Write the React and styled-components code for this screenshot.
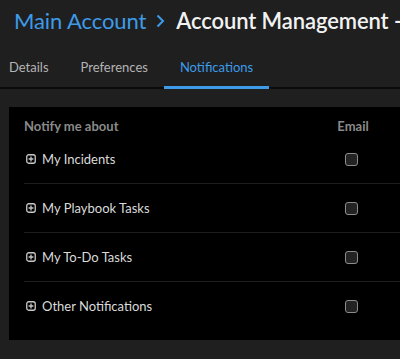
import React from 'react'
import styled, { createGlobalStyle } from 'styled-components'

const GlobalStyle = createGlobalStyle`
    body {
        margin: 0;
        background: #1f1f1f;
        font-family: "Lato", "Open Sans", sans-serif;
        overflow: hidden;
    }
`

const topics = ['My Incidents', 'My Playbook Tasks', 'My To-Do Tasks', 'Other Notifications']

function PlusIcon() {
    return (
        <svg width="10" height="10" viewBox="0 0 10 10">
            <rect x="0.75" y="0.75" width="8.5" height="8.5" rx="2" fill="none" stroke="#c8c8c8" strokeWidth="1.3" />
            <path d="M5 2.6v4.8M2.6 5h4.8" stroke="#c8c8c8" strokeWidth="1.3" />
        </svg>
    )
}

export default function App() {
    return (
        <Page>
            <GlobalStyle />
            <Header>
                <Crumb>Main Account</Crumb>
                <Chevron>
                    <svg width="9" height="14" viewBox="0 0 9 14">
                        <path d="M1.5 1.5l5.5 5.5-5.5 5.5" fill="none" stroke="#3d9be9" strokeWidth="2" />
                    </svg>
                </Chevron>
                <Title>Account Management - Users</Title>
            </Header>

            <TabBar>
                <TabList>
                    <Tab>Details</Tab>
                    <Tab>Preferences</Tab>
                    <Tab $active>Notifications</Tab>
                </TabList>
            </TabBar>

            <Content>
                <Panel>
                    <HeadRow>
                        <HeadCell>Notify me about</HeadCell>
                        <HeadCell $center>Email</HeadCell>
                    </HeadRow>
                    {topics.map((t, i) => (
                        <Row key={t} $last={i === topics.length - 1}>
                            <Label>
                                <PlusIcon />
                                <span>{t}</span>
                            </Label>
                            <CheckCell>
                                <Check />
                            </CheckCell>
                        </Row>
                    ))}
                </Panel>
            </Content>
        </Page>
    )
}

const Page = styled.div`
    width: 400px;
    height: 359px;
    overflow: hidden;
    background: #1f1f1f;
`

const Header = styled.div`
    display: flex;
    align-items: center;
    height: 40px;
    padding: 0 0 10px 14px;
    white-space: nowrap;
    font-size: 22px;
`

const Crumb = styled.span`
    color: #3d9be9;
    letter-spacing: -0.1px;
`

const Chevron = styled.span`
    display: flex;
    margin: 2px 11px 0 10px;
`

const Title = styled.span`
    color: #f2f2f2;
    font-weight: 600;
    font-size: 22px;
    letter-spacing: -0.1px;
`

const TabBar = styled.div`
    border-bottom: 2px solid #0b0b0b;
    height: 37px;
`

const TabList = styled.div`
    display: flex;
    margin-left: -7px;
    height: 100%;
`

const Tab = styled.div`
    display: flex;
    align-items: center;
    padding: 0 16px 2px;
    font-size: 13px;
    color: ${p => (p.$active ? '#3d9be9' : '#b4b4b4')};
    border-bottom: 3px solid ${p => (p.$active ? '#3d9be9' : 'transparent')};
    margin-bottom: -2px;
`

const Content = styled.div`
    padding: 18px 0 0 9px;
`

const Panel = styled.div`
    width: 520px;
    background: #000;
    padding: 10px 0 10px 15px;
`

const HeadRow = styled.div`
    display: grid;
    grid-template-columns: 299px 60px 1fr;
    height: 18px;
    align-items: center;
`

const HeadCell = styled.div`
    font-size: 13px;
    font-weight: 700;
    color: #8a8a8a;
    text-align: ${p => (p.$center ? 'center' : 'left')};
`

const Row = styled.div`
    display: grid;
    grid-template-columns: 299px 60px 1fr;
    align-items: center;
    height: 48px;
    border-bottom: ${p => (p.$last ? 'none' : '1px solid #1e1e1e')};
`

const Label = styled.div`
    display: flex;
    align-items: center;
    gap: 6px;
    padding-left: 2px;
    font-size: 13px;
    color: #dadada;
`

const CheckCell = styled.div`
    display: flex;
    justify-content: center;
    padding-right: 4px;
`

const Check = styled.span`
    width: 11px;
    height: 11px;
    border: 1px solid #8c8c8c;
    border-radius: 3px;
    background: #232323;
`
